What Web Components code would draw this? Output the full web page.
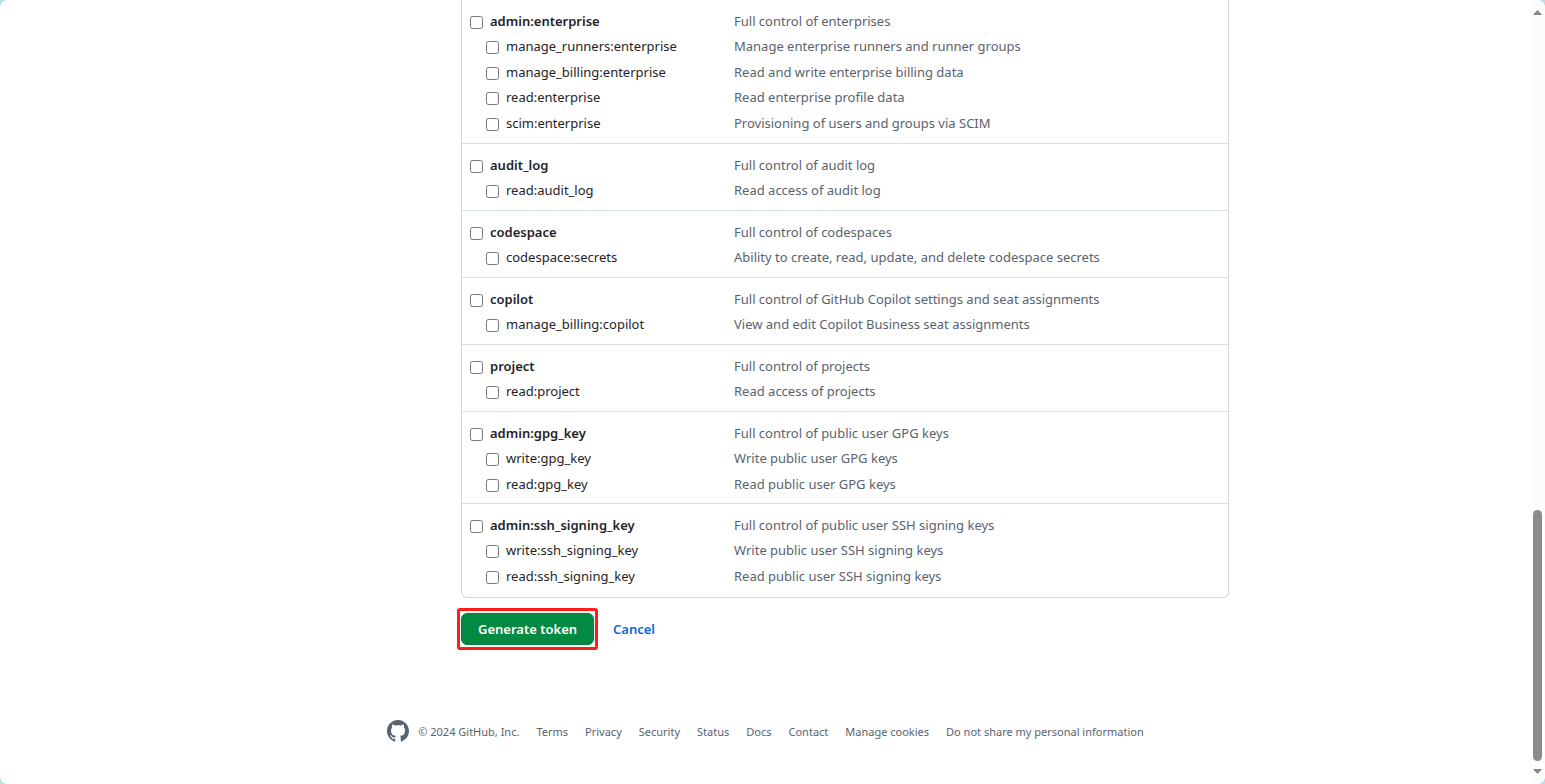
<!DOCTYPE html>
<html lang="en">
<head>
<meta charset="utf-8">
<title>New personal access token</title>
<style>
  html { height: 100%; background: #bfe0e3; }
  body { margin: 0; min-height: 100%; display: flex; font-family: "Segoe UI", "Noto Sans", "Open Sans", sans-serif; color: #1f2328; }
</style>
</head>
<body>
<token-page></token-page>
<script>
const define = (name, html, setup) => customElements.define(name, class extends HTMLElement {
  connectedCallback() {
    if (this.shadowRoot) return;
    this.attachShadow({ mode: 'open' }).innerHTML = html;
    if (setup) setup(this, this.shadowRoot);
  }
});

define('scope-row', `
<style>
  :host { display: grid; grid-template-columns: 264px 1fr; align-items: center; height: 25px; font-size: 13px; line-height: 20px; }
  :host(:nth-child(even)) { height: 26px; }
  .scope { display: flex; align-items: center; gap: 7px; }
  :host([child]) .scope { padding-left: 16px; }
  :host(:not([child])) label { font-weight: 600; }
  input { margin: 3px 0 0; width: 13px; height: 13px; flex: none; }
  .description { color: #59636e; }
</style>
<div class="scope"><input type="checkbox" id="scope" aria-describedby="description"><label for="scope"></label></div>
<span class="description" id="description"><slot></slot></span>`, (host, root) => {
  root.querySelector('label').textContent = host.getAttribute('name');
});

define('scope-group', `
<style>
  :host { display: block; padding: 8px 8px 7px; border-top: 1px solid #d9e0e2; }
  :host(:first-child) { border-top: 0; padding-bottom: 8px; }
  :host(:last-child) { padding-bottom: 9px; }
</style>
<slot></slot>`);

define('scope-list', `
<style>
  :host { display: block; border: 1px solid #d1d9e0; border-top: 0; border-radius: 0 0 6px 6px; }
</style>
<slot></slot>`);

define('form-actions', `
<style>
  :host { display: flex; align-items: center; gap: 15px; margin: 10px 0 0 -4px; font-size: 13px; line-height: 20px; font-weight: 600; }
  .highlight { border: 3px solid #fb1f18; border-radius: 3px; padding: 2px 1px; display: flex; }
  button { font: inherit; color: #fff; background: #028942; border: 1px solid #0b7f40; border-radius: 6px; padding: 5px 16px; height: 32px; }
  a { color: #0969da; text-decoration: none; }
</style>
<span class="highlight"><button type="button">Generate token</button></span>
<a href="#">Cancel</a>`);

define('site-footer', `
<style>
  :host { display: flex; justify-content: center; align-items: center; gap: 8px; margin-top: 69px; color: #59636e; font-size: 11px; line-height: 18px; }
  svg { display: block; width: 24px; height: 24px; fill: #59636e; }
  nav { display: flex; gap: 17px; padding-top: 1px; }
  a { color: inherit; text-decoration: none; }
</style>
<a href="#" aria-label="GitHub"><svg viewBox="0 0 24 24"><path d="M12 1C5.9225 1 1 5.9225 1 12C1 16.8675 4.14875 20.9787 8.52125 22.4362C9.07125 22.5325 9.2775 22.2025 9.2775 21.9137C9.2775 21.6525 9.26375 20.7862 9.26375 19.865C6.5 20.3737 5.785 19.1912 5.565 18.5725C5.44125 18.2562 4.905 17.28 4.4375 17.0187C4.0525 16.8125 3.5025 16.3037 4.42375 16.29C5.29 16.2762 5.90875 17.0875 6.115 17.4175C7.105 19.0812 8.68625 18.6137 9.31875 18.325C9.415 17.61 9.70375 17.1287 10.02 16.8537C7.5725 16.5787 5.015 15.63 5.015 11.4225C5.015 10.2262 5.44125 9.23625 6.1425 8.46625C6.0325 8.19125 5.6475 7.06375 6.2525 5.55125C6.2525 5.55125 7.17375 5.2625 9.2775 6.67875C10.1575 6.43125 11.0925 6.3075 12.0275 6.3075C12.9625 6.3075 13.8975 6.43125 14.7775 6.67875C16.8813 5.24875 17.8025 5.55125 17.8025 5.55125C18.4075 7.06375 18.0225 8.19125 17.9125 8.46625C18.6138 9.23625 19.04 10.2125 19.04 11.4225C19.04 15.6437 16.4688 16.5787 14.0213 16.8537C14.42 17.1975 14.7638 17.8575 14.7638 18.8887C14.7638 20.36 14.75 21.5425 14.75 21.9137C14.75 22.2025 14.9563 22.5462 15.5063 22.4362C19.8513 20.9787 23 16.8537 23 12C23 5.9225 18.0775 1 12 1Z"/></svg></a>
<nav aria-label="Footer">
  <span>© 2024 GitHub, Inc.</span>
  <a href="#">Terms</a><a href="#">Privacy</a><a href="#">Security</a><a href="#">Status</a><a href="#">Docs</a><a href="#">Contact</a><a href="#">Manage cookies</a><a href="#">Do not share my personal information</a>
</nav>`);

define('scroll-rail', `
<style>
  :host { display: flex; flex-direction: column; align-items: center; width: 15px; flex: none; box-sizing: border-box; padding: 10px 0; background: #fcfcfc; }
  svg { display: block; width: 9px; height: 5px; fill: #858585; }
  .track { flex: 1; display: flex; flex-direction: column; justify-content: flex-end; margin: 8px 0; }
  .thumb { width: 9px; height: 34%; border-radius: 5px; background: #8b8b8b; }
</style>
<svg viewBox="0 0 9 5"><path d="M0 5L4.500 0L9 5Z"/></svg>
<div class="track"><div class="thumb"></div></div>
<svg viewBox="0 0 9 5"><path d="M0 0L4.500 5L9 0Z"/></svg>`);

define('token-page', `
<style>
  :host { display: flex; flex: 1; background: #fff; border-radius: 8px; overflow: hidden; }
  main { flex: 1; min-width: 0; }
  .content { max-width: 928px; margin: 0 auto; display: grid; grid-template-columns: 160px 1fr; }
  form { grid-column: 2; }
</style>
<main>
  <div class="content"><form>
    <scope-list>
      <scope-group>
        <scope-row name="admin:enterprise">Full control of enterprises</scope-row>
        <scope-row child name="manage_runners:enterprise">Manage enterprise runners and runner groups</scope-row>
        <scope-row child name="manage_billing:enterprise">Read and write enterprise billing data</scope-row>
        <scope-row child name="read:enterprise">Read enterprise profile data</scope-row>
        <scope-row child name="scim:enterprise">Provisioning of users and groups via SCIM</scope-row>
      </scope-group>
      <scope-group>
        <scope-row name="audit_log">Full control of audit log</scope-row>
        <scope-row child name="read:audit_log">Read access of audit log</scope-row>
      </scope-group>
      <scope-group>
        <scope-row name="codespace">Full control of codespaces</scope-row>
        <scope-row child name="codespace:secrets">Ability to create, read, update, and delete codespace secrets</scope-row>
      </scope-group>
      <scope-group>
        <scope-row name="copilot">Full control of GitHub Copilot settings and seat assignments</scope-row>
        <scope-row child name="manage_billing:copilot">View and edit Copilot Business seat assignments</scope-row>
      </scope-group>
      <scope-group>
        <scope-row name="project">Full control of projects</scope-row>
        <scope-row child name="read:project">Read access of projects</scope-row>
      </scope-group>
      <scope-group>
        <scope-row name="admin:gpg_key">Full control of public user GPG keys</scope-row>
        <scope-row child name="write:gpg_key">Write public user GPG keys</scope-row>
        <scope-row child name="read:gpg_key">Read public user GPG keys</scope-row>
      </scope-group>
      <scope-group>
        <scope-row name="admin:ssh_signing_key">Full control of public user SSH signing keys</scope-row>
        <scope-row child name="write:ssh_signing_key">Write public user SSH signing keys</scope-row>
        <scope-row child name="read:ssh_signing_key">Read public user SSH signing keys</scope-row>
      </scope-group>
    </scope-list>
    <form-actions></form-actions>
  </form></div>
  <site-footer></site-footer>
</main>
<scroll-rail></scroll-rail>`);
</script>
</body>
</html>
